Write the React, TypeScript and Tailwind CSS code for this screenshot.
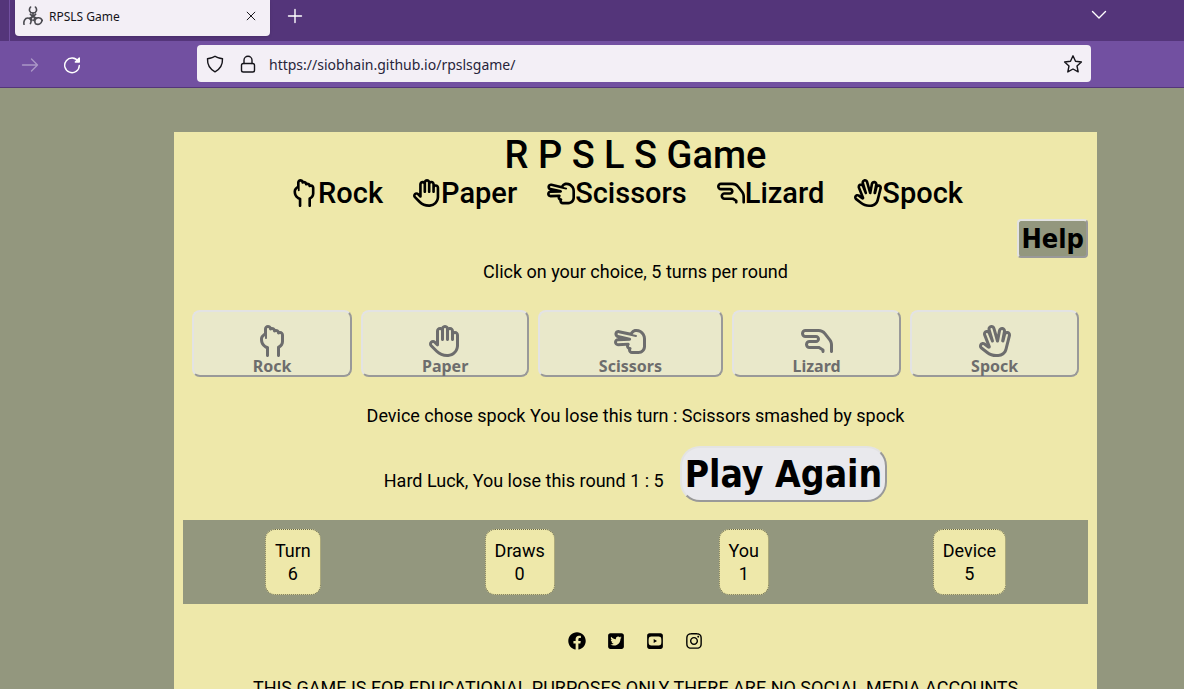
import type { ReactNode } from "react";
import type { IconType } from "react-icons";
import { FaFacebook, FaInstagram } from "react-icons/fa";
import {
  FaRegHand,
  FaRegHandBackFist,
  FaRegHandLizard,
  FaRegHandScissors,
  FaRegHandSpock,
  FaSquareTwitter,
  FaSquareYoutube,
} from "react-icons/fa6";

const choices: { name: string; Icon: IconType }[] = [
  { name: "Rock", Icon: FaRegHandBackFist },
  { name: "Paper", Icon: FaRegHand },
  { name: "Scissors", Icon: FaRegHandScissors },
  { name: "Lizard", Icon: FaRegHandLizard },
  { name: "Spock", Icon: FaRegHandSpock },
];

const scores = [
  { label: "Turn", value: 6 },
  { label: "Draws", value: 0 },
  { label: "You", value: 1 },
  { label: "Device", value: 5 },
];

const socials: { name: string; Icon: IconType }[] = [
  { name: "Facebook", Icon: FaFacebook },
  { name: "Twitter", Icon: FaSquareTwitter },
  { name: "YouTube", Icon: FaSquareYoutube },
  { name: "Instagram", Icon: FaInstagram },
];

function LineIcon({ className, children }: { className: string; children: ReactNode }) {
  return (
    <svg
      viewBox="0 0 20 20"
      className={className}
      fill="none"
      stroke="currentColor"
      strokeWidth="1.400"
      strokeLinecap="round"
      strokeLinejoin="round"
      aria-hidden="true"
    >
      {children}
    </svg>
  );
}

function SiteIcon() {
  return (
    <svg
      viewBox="0 0 20 20"
      className="size-5 text-[#4a4a50]"
      fill="none"
      stroke="currentColor"
      strokeWidth="1.600"
      strokeLinecap="round"
      aria-hidden="true"
    >
      <path d="M7.600 1C5.400 3.500 6.500 7 10 7s4.600-3.500 2.400-6" />
      <path d="M1 18.300c-.6-3 .8-6.300 3.800-6.300 2.600 0 4.200 2.800 2.600 5.600" />
      <path d="M12.600 17.800c3.200 1.600 5.800-.3 6.400-3.200" />
      <path d="M12.200 17c-1-2.400.3-4.800 2.600-5.200 2-.3 3.600.8 4.400 2.600" />
      <path d="M10 7v3M7.300 8.200L10 10.800l2.700-2.600M10 10.500l-3.600 2M10 10.500l3.600 1.800M8 11.800l1 2.600M12 11.600l-1.200 2.800" />
    </svg>
  );
}

function BrowserChrome() {
  return (
    <header className="shrink-0 font-['Noto_Sans',sans-serif]">
      <div className="flex h-[41px] items-start bg-[#54357a] text-white">
        <div className="mr-[5px] h-full w-[10px] border-r border-[#7250a1]" />
        <div className="flex h-9 w-[255px] items-center rounded-b bg-[#f3eff6] pr-2.5 pb-1 pl-2 text-[#15141a] shadow">
          <SiteIcon />
          <span className="ml-1.5 grow pt-px text-xs">RPSLS Game</span>
          <button type="button" aria-label="Close tab" className="p-0.5">
            <LineIcon className="size-3.5">
              <path d="M4.500 4.500l11 11M15.500 4.500l-11 11" />
            </LineIcon>
          </button>
        </div>
        <button type="button" aria-label="New tab" className="mt-1.5 ml-[15px]">
          <LineIcon className="size-5">
            <path d="M10 3.500v13M3.500 10h13" />
          </LineIcon>
        </button>
        <button type="button" aria-label="List all tabs" className="mt-[5px] mr-[75px] ml-auto">
          <LineIcon className="size-5">
            <path d="M3.500 6.500l6.500 6.500L16.500 6.500" />
          </LineIcon>
        </button>
      </div>
      <div className="flex h-[47px] items-center border-b border-[#54357a] bg-[#7250a1] pr-[93px] pb-px pl-5 text-white">
        <button type="button" aria-label="Forward" className="opacity-40">
          <LineIcon className="size-5">
            <path d="M2.500 11h15M11.500 5l6 6-6 6" />
          </LineIcon>
        </button>
        <button type="button" aria-label="Reload" className="ml-[22px]">
          <LineIcon className="size-5">
            <path d="M16.200 7.500A7.300 7.300 0 1 0 17.300 11.500" />
            <path d="M17.300 4v4h-4z" fill="currentColor" />
          </LineIcon>
        </button>
        <div className="ml-[115px] flex h-[37px] grow items-center rounded bg-[#f3eff6] px-2 text-[#15141a]">
          <LineIcon className="size-5">
            <path d="M10 2.200c2 1.500 4.500 2 7.500 2.600.2 5.500-2 10.200-7.500 13-5.500-2.800-7.700-7.500-7.500-13C5.500 4.200 8 3.700 10 2.200z" />
          </LineIcon>
          <LineIcon className="ml-[13px] size-5">
            <rect x="3.500" y="9.500" width="13" height="8.500" rx="1.800" />
            <path d="M6 9.500V6.200a4 4 0 0 1 8 0v3.300" />
          </LineIcon>
          <input
            type="text"
            aria-label="Address"
            readOnly
            value="https://siobhain.github.io/rpslsgame/"
            className="ml-[11px] min-w-0 grow bg-transparent pt-0.5 text-sm text-[#27243a] outline-none"
          />
          <button type="button" aria-label="Bookmark this page">
            <LineIcon className="size-5">
              <path d="M10 1.800l2.500 5.500 5.900.7-4.400 4 1.200 5.900L10 15l-5.200 2.900L6 12 1.600 8l5.900-.7z" />
            </LineIcon>
          </button>
        </div>
      </div>
    </header>
  );
}

export default function App() {
  return (
    <div className="flex h-screen flex-col overflow-hidden bg-[#93977e] font-['Roboto',sans-serif] text-lg text-black">
      <BrowserChrome />
      <main className="mt-11 mr-[87px] ml-[174px] grow bg-[#eee8aa] text-center">
        <h1 className="pt-px text-[38px] leading-[44px] font-medium">R P S L S Game</h1>
        <ul className="flex justify-center gap-[30px] pr-[18px] text-[29px] leading-8 font-medium">
          {choices.map(({ name, Icon }) => (
            <li key={name} className="flex items-center">
              <Icon className={name === "Spock" ? "-mx-0.5 h-7 w-8" : "h-7 w-auto"} />
              {name}
            </li>
          ))}
        </ul>
        <div className="mt-[10px] flex justify-end pr-[9px] font-['DejaVu_Sans_Condensed','DejaVu_Sans',sans-serif]">
          <button
            type="button"
            className="rounded border-2 border-t-[#e3e3e3] border-r-[#999] border-b-[#999] border-l-[#e3e3e3] bg-[#93977e] px-0.5 text-[27px] leading-[35px] font-bold"
          >
            Help
          </button>
        </div>
        <p className="leading-[27px]">Click on your choice, 5 turns per round</p>
        <div className="mt-[25px] flex gap-[9px] px-[18px] font-['Noto_Sans',sans-serif]">
          {choices.map(({ name, Icon }) => (
            <button
              key={name}
              type="button"
              disabled
              className="flex h-[67px] flex-auto flex-col items-center justify-end rounded-lg border-2 border-t-[#e3e3e3] border-r-[#999] border-b-[#999] border-l-[#e3e3e3] bg-[#e9e8ca] text-base leading-[18px] font-bold text-[#6d6d6d]"
            >
              <Icon className={name === "Spock" ? "h-8 w-9" : "h-8 w-auto"} />
              {name}
            </button>
          ))}
        </div>
        <p className="mt-[25px] leading-[27px]">
          Device chose spock You lose this turn : Scissors smashed by spock
        </p>
        <div className="mt-[17px] flex items-baseline justify-center gap-4">
          <p>Hard Luck, You lose this round 1 : 5</p>
          <button
            type="button"
            className="rounded-[20px] border-2 border-t-[#e3e3e3] border-r-[#999] border-b-[#999] border-l-[#e3e3e3] bg-[#e9e9ed] px-[3px] pt-0.5 font-['DejaVu_Sans_Condensed','DejaVu_Sans',sans-serif] text-[37px] leading-[50px] font-bold"
          >
            Play Again
          </button>
        </div>
        <dl className="mx-[9px] mt-[18px] flex justify-around bg-[#93977e] py-[9px] leading-[23px]">
          {scores.map(({ label, value }) => (
            <div
              key={label}
              className="rounded-[10px] border border-dotted border-[#6b6a4c] bg-[#eee8aa] px-[9px] py-[9px]"
            >
              <dt>{label}</dt>
              <dd>{value}</dd>
            </div>
          ))}
        </dl>
        <nav className="mt-7 flex justify-center gap-[21px]" aria-label="Social media">
          {socials.map(({ name, Icon }) => (
            <a key={name} href="#" aria-label={name}>
              <Icon className="size-[18px]" />
            </a>
          ))}
        </nav>
        <p className="mt-6 leading-[27px] uppercase">
          This game is for educational purposes only there are no social media accounts
        </p>
      </main>
    </div>
  );
}
